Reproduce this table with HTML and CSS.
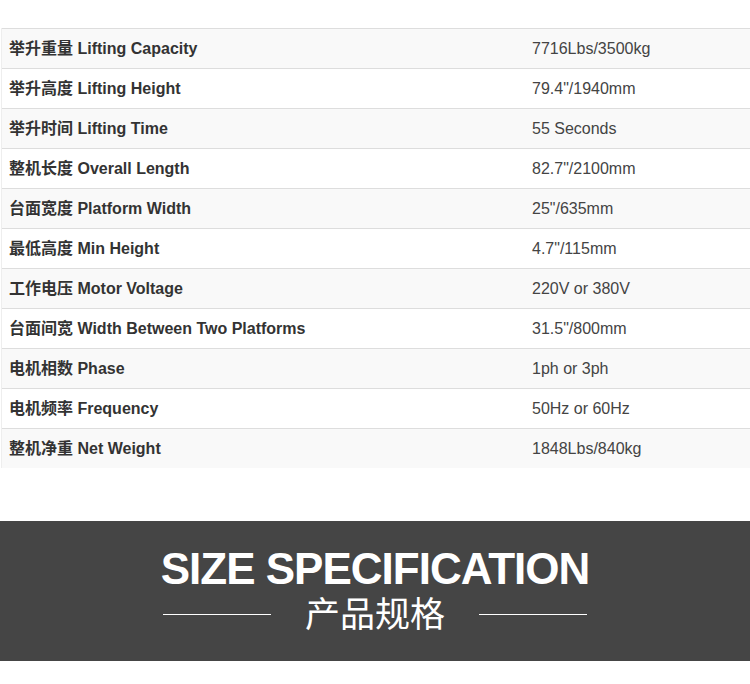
FILE: index.html
```html
<!DOCTYPE html>
<html lang="zh">
<head>
<meta charset="utf-8">
<title>Specifications</title>
<link rel="stylesheet" href="styles.css">
</head>
<body>
<div class="specs">
  <div class="row"><div class="label">举升重量 Lifting Capacity</div><div class="value">7716Lbs/3500kg</div></div>
  <div class="row"><div class="label">举升高度 Lifting Height</div><div class="value">79.4"/1940mm</div></div>
  <div class="row"><div class="label">举升时间 Lifting Time</div><div class="value">55 Seconds</div></div>
  <div class="row"><div class="label">整机长度 Overall Length</div><div class="value">82.7"/2100mm</div></div>
  <div class="row"><div class="label">台面宽度 Platform Width</div><div class="value">25"/635mm</div></div>
  <div class="row"><div class="label">最低高度 Min Height</div><div class="value">4.7"/115mm</div></div>
  <div class="row"><div class="label">工作电压 Motor Voltage</div><div class="value">220V or 380V</div></div>
  <div class="row"><div class="label">台面间宽 Width Between Two Platforms</div><div class="value">31.5"/800mm</div></div>
  <div class="row"><div class="label">电机相数 Phase</div><div class="value">1ph or 3ph</div></div>
  <div class="row"><div class="label">电机频率 Frequency</div><div class="value">50Hz or 60Hz</div></div>
  <div class="row"><div class="label">整机净重 Net Weight</div><div class="value">1848Lbs/840kg</div></div>
</div>
<section class="band">
  <h2 class="band-title">SIZE SPECIFICATION</h2>
  <div class="band-sub">
    <span class="band-line"></span>
    <span class="band-cn">产品规格</span>
    <span class="band-line"></span>
  </div>
</section>
</body>
</html>
```
FILE: styles.css
```css
* { box-sizing: border-box; }
html, body { margin: 0; padding: 0; background: #fff; }
body {
  width: 750px;
  height: 684px;
  overflow: hidden;
  font-family: "Liberation Sans", Arial, "Noto Sans CJK SC", sans-serif;
  color: #333;
}
.specs {
  margin-top: 28px;
  margin-left: 1px;
  border-left: 1px solid #eee;
}
.row {
  display: grid;
  grid-template-columns: 522px 1fr;
  align-items: center;
  height: 40px;
  border-top: 1px solid #ddd;
  font-size: 16px;
  line-height: 18px;
}
.row:nth-child(odd) { background: #f9f9f9; }
.label {
  padding-left: 7px;
  font-weight: bold;
  color: #333;
}
.value {
  padding-left: 8px;
  color: #444;
}
.band {
  margin-top: 53px;
  height: 140px;
  background: #454545;
  padding-top: 28px;
  color: #fff;
  text-align: center;
}
.band-title {
  margin: 0;
  font-family: "Liberation Sans", Arial, sans-serif;
  font-weight: bold;
  font-size: 44px;
  line-height: 40px;
  letter-spacing: -1px;
}
.band-sub {
  margin-top: 4px;
  display: flex;
  justify-content: center;
  align-items: center;
  gap: 34px;
  height: 38px;
}
.band-line {
  width: 108px;
  height: 1px;
  background: #fff;
  margin-top: 4px;
}
.band-cn {
  font-family: "Noto Sans CJK SC", sans-serif;
  font-weight: 400;
  font-size: 35px;
  line-height: 38px;
}
```
